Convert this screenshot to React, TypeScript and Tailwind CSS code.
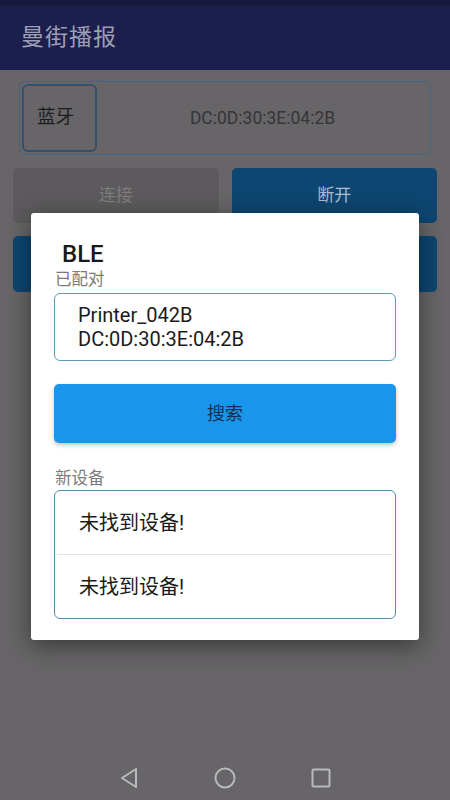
const font = { fontFamily: '"Roboto", "Noto Sans CJK SC", sans-serif' };

const App = () => {
  return (
    <main className="relative w-[450px] h-[800px] overflow-hidden bg-[#676567]" style={font}>
      <div className="h-[6px] bg-[#171a3c]" />
      <header className="h-[64px] bg-[#1c1f4e] flex items-center px-[21px]">
        <h1 className="text-[23px] text-[#9c9fb4] tracking-[1px]">曼街播报</h1>
      </header>

      <section className="px-[13px] pt-[11px]">
        <div className="mx-[6px] h-[74px] rounded-[6px] border border-[#3d6783] flex items-stretch p-[2px]">
          <div className="w-[75px] rounded-[6px] border-2 border-[#34506b] flex items-center pl-[13px] text-[18.5px] text-[#1c1c1c]">
            蓝牙
          </div>
          <div className="flex-1 flex items-center justify-center text-[17.5px] text-[#363537]">
            DC:0D:30:3E:04:2B
          </div>
        </div>

        <div className="mt-[13px] grid grid-cols-2 gap-[13px]">
          <button className="h-[55px] rounded-[5px] bg-[#5c5a5c] text-[#7e7c7e] text-[17px]">连接</button>
          <button className="h-[55px] rounded-[5px] bg-[#0d4670] text-[#aebccb] text-[17px]">断开</button>
        </div>
        <button className="mt-[13px] w-full h-[56px] rounded-[5px] bg-[#0d4670]" />
      </section>

      <nav className="absolute bottom-0 left-0 right-0 h-[44px] flex items-center justify-center gap-[75px]">
        <svg width="20" height="22" viewBox="0 0 20 22" fill="none" stroke="#b9b8ba" strokeWidth="2" strokeLinejoin="round">
          <path d="M17 2 L3 11 L17 20 Z" />
        </svg>
        <svg width="22" height="22" viewBox="0 0 22 22" fill="none" stroke="#b9b8ba" strokeWidth="2">
          <circle cx="11" cy="11" r="9.5" />
        </svg>
        <svg width="20" height="20" viewBox="0 0 20 20" fill="none" stroke="#b9b8ba" strokeWidth="2">
          <rect x="1.5" y="1.5" width="17" height="17" rx="1" />
        </svg>
      </nav>

      <div className="absolute left-[31px] top-[213px] w-[388px] h-[427px] bg-white rounded-[3px] shadow-[0_6px_24px_rgba(0,0,0,0.45)] px-[23px] pt-[27px]">
        <h2 className="pl-[8px] text-[24px] leading-[28px] font-medium text-[#1a1a1a]" style={{ fontFamily: '"Roboto", sans-serif' }}>
          BLE
        </h2>
        <p className="mt-[1px] pl-[1px] text-[16.5px] leading-[21px] text-[#7a7a7a]">已配对</p>
        <div className="mt-[3px] h-[68px] rounded-[6px] border border-[#5c9cb4] px-[23px] flex flex-col justify-center text-[20px] leading-[24px] text-[#1a1a1a]">
          <span>Printer_042B</span>
          <span>DC:0D:30:3E:04:2B</span>
        </div>
        <button className="mt-[23px] w-full h-[59px] rounded-[5px] bg-[#1996eb] text-[#12304d] text-[18px] shadow-[0_2px_4px_rgba(0,0,0,0.25)]">
          搜索
        </button>
        <p className="mt-[25px] pl-[1px] text-[16.5px] leading-[21px] text-[#7a7a7a]">新设备</p>
        <div className="mt-[1px] rounded-[6px] border border-[#4f8fae] px-[2px]">
          <div className="h-[64px] flex items-center px-[22px] text-[20px] text-[#1a1a1a] border-b border-[#e2e2e2]">未找到设备!</div>
          <div className="h-[63px] flex items-center px-[22px] text-[20px] text-[#1a1a1a]">未找到设备!</div>
        </div>
      </div>
    </main>
  );
};

export default App;
